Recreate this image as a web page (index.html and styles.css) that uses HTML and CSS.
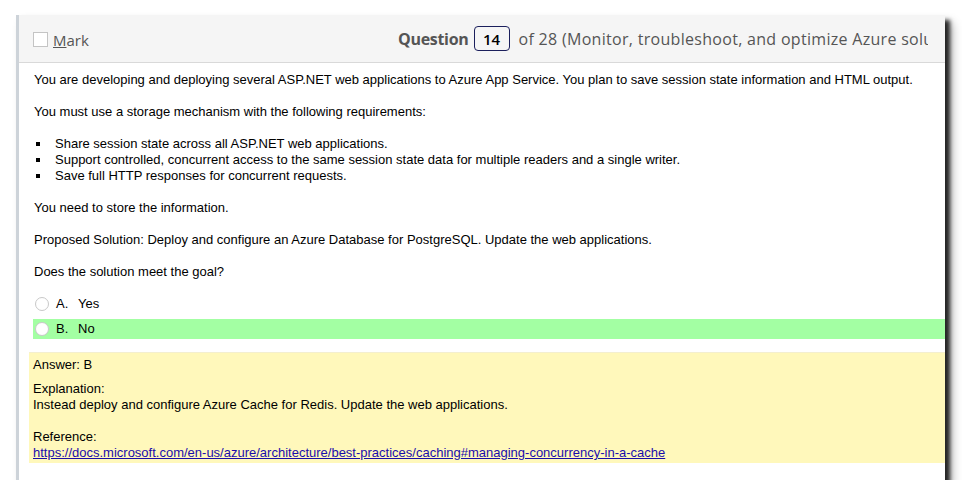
FILE: index.html
```html
<!DOCTYPE html>
<html>
<head>
<meta charset="utf-8">
<link rel="stylesheet" href="styles.css">
</head>
<body>
<div class="card">
  <div class="header">
    <label class="mark"><span class="box"></span><span><u>M</u>ark</span></label>
    <div class="qinfo">
      <span class="qlabel">Question</span>
      <span class="qnum">14</span>
      <span class="qof">of 28 (Monitor, troubleshoot, and optimize Azure solutions)</span>
    </div>
  </div>
  <div class="content">
    <p>You are developing and deploying several ASP.NET web applications to Azure App Service. You plan to save session state information and HTML output.</p>
    <p>You must use a storage mechanism with the following requirements:</p>
    <ul>
      <li>Share session state across all ASP.NET web applications.</li>
      <li>Support controlled, concurrent access to the same session state data for multiple readers and a single writer.</li>
      <li>Save full HTTP responses for concurrent requests.</li>
    </ul>
    <p>You need to store the information.</p>
    <p>Proposed Solution: Deploy and configure an Azure Database for PostgreSQL. Update the web applications.</p>
    <p>Does the solution meet the goal?</p>
    <div class="options">
      <div class="opt"><span class="radio"></span><span class="letter">A.</span><span>Yes</span></div>
      <div class="opt correct"><span class="radio"></span><span class="letter">B.</span><span>No</span></div>
    </div>
  </div>
  <div class="answer">
    <div class="ans">Answer: B</div>
    <div class="expl">Explanation:<br>Instead deploy and configure Azure Cache for Redis. Update the web applications.<br><br>Reference:<br><a href="#">https://docs.microsoft.com/en-us/azure/architecture/best-practices/caching#managing-concurrency-in-a-cache</a></div>
  </div>
</div>
</body>
</html>
```
FILE: styles.css
```css
html, body {
  margin: 0;
  padding: 0;
  background: #fff;
}
body {
  padding: 15px 0 0 16px;
}
.card {
  width: 926px;
  height: 465px;
  background: #fff;
  border-left: 3px solid #cdd3d9;
  box-shadow: 5px 5px 4px rgba(0,0,0,0.8), 7px 8px 10px rgba(0,0,0,0.3);
  overflow: hidden;
  font-family: "Liberation Sans", Arial, sans-serif;
  font-size: 13px;
  color: #000;
}
.header {
  height: 47px;
  background: #f5f5f5;
  border-bottom: 1px solid #d9d9d9;
  display: flex;
  align-items: center;
  padding-left: 14px;
  font-family: "Open Sans", "Noto Sans", sans-serif;
  font-size: 15px;
  color: #555;
  white-space: nowrap;
}
.mark {
  display: flex;
  align-items: center;
  gap: 5px;
  width: 365px;
  flex: none;
  padding-top: 2px;
}
.mark u { text-decoration-thickness: 1px; }
.box {
  width: 13px;
  height: 13px;
  border: 1px solid #c4c4c4;
  background: #fff;
}
.qinfo {
  display: flex;
  align-items: center;
  overflow: hidden;
  width: 530px;
  flex: none;
}
.qlabel {
  flex: none;
  font-weight: 700;
  color: #555;
  font-size: 16px;
  letter-spacing: -0.3px;
}
.qnum {
  flex: none;
  margin: 0 9px 0 5px;
  width: 34px;
  height: 23px;
  border: 1px solid #1b1f5c;
  border-radius: 4px;
  display: flex;
  align-items: center;
  justify-content: center;
  color: #000;
  font-weight: 600;
  font-size: 15px;
}
.qof {
  flex: none;
  font-size: 16px;
  letter-spacing: 0.3px;
}
.content {
  padding: 9px 0 0 15px;
  line-height: 16px;
}
.content p {
  margin: 0 0 16px;
}
.content ul {
  margin: 0 0 16px;
  padding: 0;
  list-style: none;
}
.content li {
  display: flex;
  align-items: center;
}
.content li::before {
  content: "";
  width: 4px;
  height: 4px;
  background: #000;
  margin: 0 15px 0 2px;
  flex: none;
}
.options {
  display: flex;
  flex-direction: column;
  gap: 5px;
  margin-top: -2px;
}
.opt {
  display: flex;
  align-items: center;
  height: 20px;
  padding-left: 1px;
}
.opt.correct {
  background: #a3ffa3;
  margin-left: -1px;
  padding-left: 2px;
}
.radio {
  width: 12px;
  height: 12px;
  border-radius: 50%;
  border: 1px solid #c8c8c8;
  background: #fff;
  margin-right: 7px;
}
.letter {
  width: 22px;
}
.answer {
  margin: 13px 0 0 10px;
  height: 111px;
  background: #fff8bb;
  border-top: 1px solid #f4efcf;
  padding: 4px 0 0 4px;
  line-height: 16px;
  box-sizing: border-box;
}
.ans {
  margin-bottom: 8px;
}
.expl a {
  color: #1a0dab;
  text-decoration: underline;
}
```
